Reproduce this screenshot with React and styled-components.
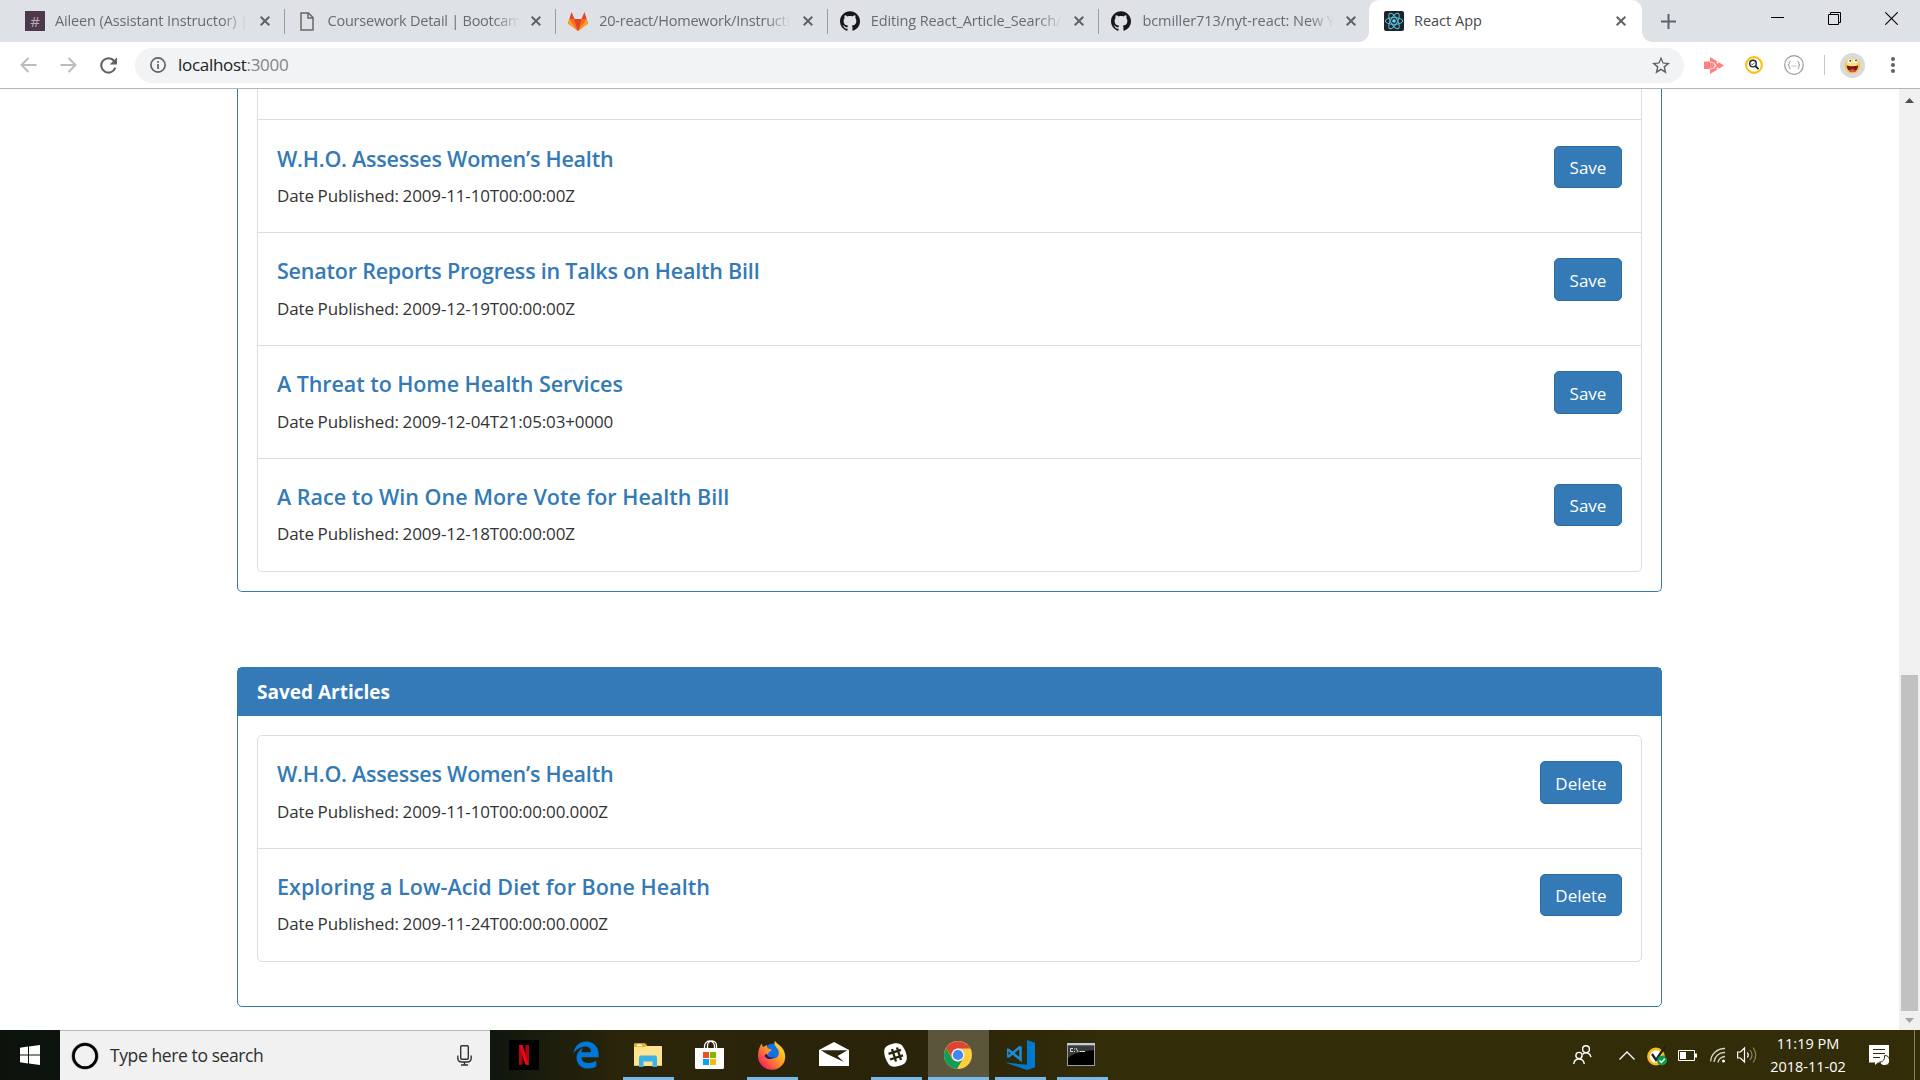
import React from 'react';
import styled, { createGlobalStyle, css } from 'styled-components';
import { SiGithub } from 'react-icons/si';
import { FaEdgeLegacy } from 'react-icons/fa6';

const GlobalStyle = createGlobalStyle`
  * { box-sizing: border-box; }
  html, body { margin: 0; padding: 0; overflow: hidden; background: #fff; }
  body { font-family: "Open Sans", "Noto Sans", sans-serif; color: #333; }
  svg { display: block; flex: none; }
`;

/* ---------- shell ---------- */
const Screen = styled.div`
  width: 1920px;
  height: 1080px;
  display: flex;
  flex-direction: column;
  overflow: hidden;
`;

/* ---------- tab strip ---------- */
const TabStrip = styled.div`
  height: 42px;
  flex: none;
  display: flex;
  align-items: stretch;
  padding-left: 13px;
  background: #dee1e6;
`;
const Tab = styled.div`
  width: 271.6px;
  display: flex;
  align-items: center;
  padding: 0 15px 0 12px;
  position: relative;
  ${(p) => p.$divided && css`
    &::after {
      content: "";
      position: absolute;
      right: 0;
      top: 9px;
      width: 1px;
      height: 25px;
      background: #9a9da1;
    }
  `}
  ${(p) => p.$active && css`
    margin-left: -2px;
    padding: 0 16px 0 15px;
    width: 273px;
    background: #fff;
    border-radius: 10px 10px 0 0;
    &::before, &::after {
      content: "";
      position: absolute;
      bottom: 0;
      width: 10px;
      height: 10px;
    }
    &::before { left: -10px; background: radial-gradient(circle at 0 0, transparent 9.5px, #fff 10px); }
    &::after { right: -10px; background: radial-gradient(circle at 100% 0, transparent 9.5px, #fff 10px); }
  `}
`;
const Favicon = styled.div`
  width: 20px;
  height: 20px;
  display: flex;
  align-items: center;
  justify-content: center;
`;
const SlackChannel = styled(Favicon)`
  background: #4d394b;
  color: #b9aab8;
  font-size: 15px;
  line-height: 20px;
`;
const TabTitle = styled.div`
  width: 194px;
  margin-left: ${(p) => p.$gap || 10}px;
  height: 20px;
  font-size: 14.5px;
  line-height: 20px;
  letter-spacing: ${(p) => p.$track || 0}px;
  white-space: nowrap;
  color: ${(p) => (p.$active ? '#45494d' : '#686c71')};
  ${(p) => !p.$active && css`mask-image: linear-gradient(90deg, #000 167px, transparent 192px);`}
`;
const TabClose = styled.div`
  margin-left: auto;
  width: 10px;
`;
const NewTab = styled.div`
  display: flex;
  align-items: center;
  padding-left: 19px;
`;
const WindowButtons = styled.div`
  margin-left: auto;
  display: flex;
  align-items: flex-start;
  padding: 12px 22px 0 0;
  gap: 44px;
`;

/* ---------- toolbar ---------- */
const Toolbar = styled.div`
  height: 47px;
  flex: none;
  display: flex;
  align-items: center;
  border-bottom: 1px solid #b4b5b7;
  padding: 0 21px 0 20px;
  background: #fff;
`;
const NavButtons = styled.div`
  display: flex;
  align-items: center;
  gap: 23px;
  width: 115px;
`;
const Omnibox = styled.div`
  width: 1549px;
  height: 35px;
  border-radius: 18px;
  background: #f1f3f4;
  display: flex;
  align-items: center;
  padding: 0 14px 0 15px;
`;
const Url = styled.div`
  margin-left: 12px;
  flex: 1;
  font-size: 17px;
  line-height: 24px;
  letter-spacing: -0.3px;
  color: #202124;
  span { color: #80868b; }
`;
const Extensions = styled.div`
  flex: 1;
  display: flex;
  align-items: center;
  margin-left: 20px;
`;
const ExtensionSlot = styled.div`
  width: ${(p) => p.$w}px;
  display: flex;
  align-items: center;
`;
const ExtensionDivider = styled.div`
  width: 1px;
  height: 20px;
  background: #c4c6c9;
  margin-right: 15px;
`;

/* ---------- page ---------- */
const Viewport = styled.div`
  height: 941px;
  flex: none;
  display: flex;
  overflow: hidden;
`;
const Page = styled.main`
  flex: 1;
  display: flex;
  flex-direction: column;
  align-items: center;
  overflow: hidden;
`;
const Panel = styled.section`
  width: 1425px;
  flex: none;
  border: 1px solid #337ab7;
  border-radius: 5px;
  ${(p) => p.$continued && css`border-top: 0; border-radius: 0 0 5px 5px; margin-bottom: 75px;`}
`;
const PanelHeading = styled.h3`
  margin: 0;
  height: 48px;
  padding: 1px 0 0 19px;
  background: #337ab7;
  color: #fff;
  font-size: 19px;
  font-weight: 700;
  line-height: 47px;
`;
const PanelBody = styled.div`
  padding: ${(p) => p.$padding};
`;
const ArticleList = styled.ul`
  margin: 0;
  padding: 0;
  list-style: none;
  border: 1px solid #ddd;
  border-radius: 5px;
  ${(p) => p.$continued && css`border-top: 0; border-radius: 0 0 5px 5px; padding-top: 30px;`}
`;
const ArticleRow = styled.li`
  height: 113px;
  display: flex;
  justify-content: space-between;
  align-items: flex-start;
  padding: ${(p) => (p.$low ? 26 : 25)}px 19px 0 19px;
  border-top: 1px solid #ddd;
  ${ArticleList} > &:first-child {
    ${(p) => p.$flush && css`border-top: 0; height: 112px;`}
  }
`;
const ArticleTitle = styled.h4`
  margin: 0 0 ${(p) => (p.$tight ? 12 : 13)}px;
  font-size: 21.5px;
  font-weight: 600;
  line-height: 26px;
  letter-spacing: ${(p) => p.$track}px;
  color: #337ab7;
  white-space: nowrap;
`;
const Published = styled.p`
  margin: 0;
  font-size: 17px;
  line-height: 24px;
  letter-spacing: -0.14px;
  word-spacing: -0.5px;
  color: #333;
`;
const ActionButton = styled.button`
  height: ${(p) => (p.$tight ? 42 : 43)}px;
  width: ${(p) => p.$w}px;
  padding: 2px 0 0;
  border: 1px solid #2e6da4;
  border-radius: 5px;
  background: #337ab7;
  color: #fff;
  font: 400 17px/24px "Open Sans", "Noto Sans", sans-serif;
`;

/* ---------- scrollbar ---------- */
const ScrollTrack = styled.div`
  width: 21px;
  background: #f0f0f0;
  display: flex;
  flex-direction: column;
  align-items: center;
  padding: 9px 0 7px;
`;
const ScrollThumb = styled.div`
  width: 17px;
  height: 336px;
  background: #c1c1c1;
  margin: auto 0 7px;
`;

/* ---------- taskbar ---------- */
const Taskbar = styled.footer`
  height: 50px;
  flex: none;
  display: flex;
  background: linear-gradient(90deg, #0c130d 0, #0f160e 490px, #2b250a 620px, #29230a 900px, #332c08 1100px, #332c08 100%);
`;
const StartButton = styled.div`
  width: 60px;
  display: flex;
  align-items: center;
  justify-content: center;
`;
const SearchBox = styled.div`
  width: 430px;
  display: flex;
  align-items: center;
  border-top: 1px solid #b9b9b9;
  background: #f1f1f1;
  padding: 0 18px 0 11px;
`;
const SearchText = styled.div`
  flex: 1;
  margin: 0 0 1px 11px;
  font-size: 17.5px;
  line-height: 24px;
  letter-spacing: -0.4px;
  color: #2f2f2f;
`;
const Apps = styled.div`
  display: flex;
  padding-left: 3px;
`;
const AppSlot = styled.div`
  width: 62px;
  display: flex;
  align-items: center;
  justify-content: center;
  padding: ${(p) => p.$padding || 0};
  background: ${(p) => (p.$focused ? '#5b553b' : 'transparent')};
  box-shadow: ${(p) => (p.$focused ? 'inset 0 -3px #76b9ed' : 'none')};
  ${(p) => p.$focused && css`width: 61px; margin-left: 1px; padding-right: 1px;`}
  ${(p) => p.$running && css`
    background: linear-gradient(#76b9ed, #76b9ed) 50% 100% / 51px 3px no-repeat;
  `}
`;
const Tray = styled.div`
  flex: 1;
  display: flex;
  align-items: center;
  justify-content: flex-end;
`;
const TrayItem = styled.div`
  width: ${(p) => p.$w}px;
  flex: none;
`;
const Clock = styled.div`
  width: 86px;
  margin-right: 18px;
  text-align: center;
  color: #fff;
  font-size: 14.5px;
  line-height: 23px;
`;
const NoticeItem = styled.div`
  width: 45px;
`;
const ShowDesktop = styled.div`
  width: 6px;
  align-self: stretch;
  border-left: 1px solid #84804f;
`;

/* ---------- icons ---------- */
const Cross = () => (
  <svg width="10" height="10" viewBox="0 0 10 10"><path d="M.7.7l8.6 8.6M9.3.7L.7 9.3" stroke="#5f6368" strokeWidth="2" /></svg>
);
const PageIcon = () => (
  <svg width="14" height="19" viewBox="0 0 14 19">
    <path d="M1 1h7.500l4.500 4.500V18H1zM8 1v5h5" fill="none" stroke="#6b6863" strokeWidth="1.500" />
  </svg>
);
const Gitlab = () => (
  <svg width="20" height="19" viewBox="0 0 20 19">
    <path d="M10 19L0 11.500 3.500 0 6.500 7h7L16.500 0 20 11.500z" fill="#e24329" />
    <path d="M10 19L6.300 7H1.400zM10 19l3.700-12h4.900z" fill="#fc6d26" />
    <path d="M6.300 7h7.400L10 19z" fill="#e24329" />
    <path d="M1.400 7L0 11.500 10 19zM18.600 7L20 11.500 10 19z" fill="#fca326" />
  </svg>
);
const ReactIcon = () => (
  <svg width="20" height="20" viewBox="0 0 20 20">
    <rect width="20" height="20" rx="2" fill="#20232a" />
    <g fill="none" stroke="#57c1dc" strokeWidth="1">
      <ellipse cx="10" cy="10" rx="8.700" ry="3.400" />
      <ellipse cx="10" cy="10" rx="8.700" ry="3.400" transform="rotate(60 10 10)" />
      <ellipse cx="10" cy="10" rx="8.700" ry="3.400" transform="rotate(120 10 10)" />
    </g>
    <circle cx="10" cy="10" r="1.800" fill="#61dafb" />
  </svg>
);
const Plus = () => (
  <svg width="15" height="15" viewBox="0 0 15 15"><path d="M7.500 0v15M0 7.500h15" stroke="#5f6368" strokeWidth="2" /></svg>
);
const Minimize = () => (
  <svg width="13" height="13" viewBox="0 0 13 13"><path d="M0 5.500h13" stroke="#000" /></svg>
);
const Restore = () => (
  <svg width="13" height="13" viewBox="0 0 13 13"><path d="M.5 2.500h10v10H.5zM2.500 2.500v-2h10v10h-2" fill="none" stroke="#000" /></svg>
);
const CloseWindow = () => (
  <svg width="13" height="13" viewBox="0 0 13 13"><path d="M.3.3l12.400 12.400M12.700.3L.3 12.700" stroke="#000" strokeWidth="1.100" /></svg>
);
const Arrow = ({ flip }) => (
  <svg width="17" height="16" viewBox="0 0 17 16">
    <path transform={flip ? 'matrix(-1 0 0 1 17 0)' : undefined} d="M16.500 8H1.500M8.500 1L1.500 8l7 7" fill="none" stroke="#babcbe" strokeWidth="2" />
  </svg>
);
const Reload = () => (
  <svg width="17" height="17" viewBox="0 0 17 17">
    <path d="M14.200 4A7.200 7.200 0 1 0 15.300 10.700" fill="none" stroke="#5f6368" strokeWidth="2.100" />
    <path d="M17 .2V7.500H9.700z" fill="#5f6368" />
  </svg>
);
const Info = () => (
  <svg width="16" height="16" viewBox="0 0 16 16">
    <circle cx="8" cy="8" r="7.100" fill="none" stroke="#5f6368" strokeWidth="1.700" />
    <path d="M8 7v5M8 4v1.800" stroke="#5f6368" strokeWidth="1.700" />
  </svg>
);
const Star = () => (
  <svg width="18" height="18" viewBox="0 0 24 24">
    <path fill="#5f6368" d="M24 9.240l-8.630-.74L12 .5 8.630 8.510 0 9.240l6.550 5.680L4.580 23.500 12 18.900l7.420 4.600-1.960-8.580L24 9.240zM12 16.500l-4.510 2.800 1.200-5.260-3.970-3.460 5.240-.45L12 5.100l2.050 5.040 5.240.45-3.970 3.460 1.200 5.260L12 16.500z" />
  </svg>
);
const PinkArrow = () => (
  <svg width="20" height="17" viewBox="0 0 20 17">
    <path d="M0 4.500h6v7.500H0z" fill="#ff8080" />
    <path d="M6 0L20 8.500 6 17v-4.500l4-1 2.500-3-2.500-3-4-1z" fill="#ff8080" />
    <path d="M6 5.500h3l2 3-2 3H6z" fill="#ff8a8a" />
    <circle cx="13.500" cy="5.500" r="1" fill="#fff" />
    <circle cx="13.500" cy="11.500" r="1" fill="#fff" />
  </svg>
);
const Magnifier = () => (
  <svg width="18" height="18" viewBox="0 0 18 18">
    <circle cx="9" cy="9" r="7.900" fill="#fff" stroke="#fdc010" strokeWidth="2.100" />
    <circle cx="8" cy="7.600" r="3.300" fill="none" stroke="#222" strokeWidth="1.400" />
    <path d="M10.500 10.200l3 3" stroke="#222" strokeWidth="1.900" />
    <path d="M6.300 8l1.300.6 2-2" fill="none" stroke="#222" strokeWidth=".8" />
  </svg>
);
const Braces = () => (
  <svg width="20" height="20" viewBox="0 0 20 20">
    <circle cx="10" cy="10" r="9.300" fill="none" stroke="#9b9b9b" strokeWidth="1.200" />
    <path d="M6.500 6.500c-1.500 0-1.300.7-1.300 1.800s-.2 1.700-1.200 1.700c1 0 1.200.6 1.200 1.700s-.2 1.800 1.300 1.800M13.500 6.500c1.500 0 1.300.7 1.300 1.800s.2 1.700 1.200 1.700c-1 0-1.200.6-1.200 1.700s.2 1.800-1.300 1.800" fill="none" stroke="#8f8f8f" />
    <path d="M7.500 11h1M9.500 11h1M11.500 11h1" stroke="#8f8f8f" />
  </svg>
);
const Avatar = () => (
  <svg width="25" height="25" viewBox="0 0 25 25">
    <circle cx="12.500" cy="12.500" r="12.500" fill="#dadada" />
    <circle cx="12.500" cy="12.800" r="7.800" fill="#f4c64f" />
    <ellipse cx="12.500" cy="9.500" rx="6" ry="4.300" fill="#fbe08a" />
    <circle cx="9.700" cy="8.500" r="2" fill="#fff" /><circle cx="15.300" cy="8" r="2" fill="#fff" />
    <circle cx="10.200" cy="7.800" r=".9" fill="#333" /><circle cx="16" cy="7.300" r=".9" fill="#333" />
    <path d="M6.800 12.600c3 1 8 1 11.300 0-.1 4-2.500 6.700-5.600 6.700s-5.600-2.800-5.700-6.700z" fill="#7c1717" />
    <path d="M9 17.500c1.500-1.700 5-1.700 6.800 0-2 2-5 2-6.800 0z" fill="#e0524a" />
  </svg>
);
const Dots = () => (
  <svg width="4" height="18" viewBox="0 0 4 18" fill="#5f6368"><circle cx="2" cy="3" r="2" /><circle cx="2" cy="9" r="2" /><circle cx="2" cy="15" r="2" /></svg>
);
const ScrollArrow = ({ down }) => (
  <svg width="9" height="5" viewBox="0 0 9 5"><path d={down ? 'M0 0h9L4.500 5z' : 'M0 5h9L4.500 0z'} fill={down ? '#a3a3a3' : '#505050'} /></svg>
);
const WindowsLogo = () => (
  <svg width="20" height="20" viewBox="0 0 20 20" fill="#fff">
    <path d="M0 2.700L8 1.600v7.900H0zM9 1.500L20 0v9.500H9zM0 10.500h8v7.900L0 17.300zM9 10.500h11V20L9 18.500z" />
  </svg>
);
const Cortana = () => (
  <svg width="28" height="28" viewBox="0 0 28 28">
    <circle cx="14" cy="14" r="12.300" fill="none" stroke="#8a8a8a" strokeWidth="2.500" />
    <circle cx="14" cy="14" r="11.600" fill="none" stroke="#000" strokeWidth="2.700" />
  </svg>
);
const Mic = () => (
  <svg width="15" height="21" viewBox="0 0 15 21" fill="none" stroke="#333" strokeWidth="1.400">
    <rect x="3.700" y=".8" width="7.600" height="13.400" rx="1" />
    <path d="M.8 10.500v2.500c0 2.500 1.500 4 4 4h5.400c2.500 0 4-1.500 4-4v-2.500M7.500 17v3M4 20h7" />
  </svg>
);
const Netflix = () => (
  <svg width="30" height="30" viewBox="0 0 30 30">
    <rect width="30" height="30" />
    <path d="M10 5h3.500v19.600l-3.500.4zM16.500 5H20v20l-3.500-.4z" fill="#b1060f" />
    <path d="M10 5h3.500L20 25l-3.800-.4z" fill="#e50914" />
  </svg>
);
const Explorer = () => (
  <svg width="28" height="24" viewBox="0 0 28 24">
    <path d="M0 1.500Q0 .5 1 .5h10l2 2.500h14q1 0 1 1V23H0z" fill="#ffe593" />
    <path d="M0 1.500Q0 .5 1 .5h10l2 1.500-2 2H0z" fill="#e9ae2c" />
    <path d="M3 1.500h5v1.700H3z" fill="#fff" />
    <path d="M5 24V14.500q0-2 2-2h14q2 0 2 2V24h-4.500v-5.500h-9V24z" fill="#3bb1e6" />
    <path d="M0 22h5v1H0zM23 22h5v1h-5z" fill="#edbd4b" />
  </svg>
);
const Store = () => (
  <svg width="29" height="29" viewBox="0 0 29 29">
    <path d="M9.500 8V6.500a5 5.500 0 0 1 10 0V8M12.500 8V5.500a4.500 4.500 0 0 1 9 0V8" fill="none" stroke="#fff" strokeWidth="1.300" />
    <path d="M0 8h29v19.500q0 1.500-1.500 1.500h-26Q0 29 0 27.500z" fill="#fff" />
    <path d="M8 12h6v6H8z" fill="#f25022" /><path d="M15 12h6v6h-6z" fill="#7fba00" />
    <path d="M8 19h6v6H8z" fill="#00a4ef" /><path d="M15 19h6v6h-6z" fill="#ffb900" />
  </svg>
);
const Firefox = () => (
  <svg width="28" height="29" viewBox="0 0 28 29">
    <defs>
      <linearGradient id="ffx" x1="1" y1="0" x2="0" y2="1">
        <stop offset="0" stopColor="#fff44f" /><stop offset=".35" stopColor="#ffb21c" /><stop offset=".6" stopColor="#ff7139" /><stop offset=".85" stopColor="#f0295a" /><stop offset="1" stopColor="#b5179e" />
      </linearGradient>
    </defs>
    <circle cx="15" cy="12" r="9.500" fill="#1170e4" />
    <path d="M17 0c2 3 7 5 9 10 4 9-2 18.700-12 18.700C6 28.700 0 22.500 0 15 0 9 2 5 3.500 2.500L5 6l4-2c-.5 2 .5 4 3 4 2 0 2 1 0 2.500-2 1-2.500 3-1 5 2.500 3 7.500 2.500 9-.5 2-4 0-7-2-9-1.500-2-2-4-1-6z" fill="url(#ffx)" />
    <path d="M9 13c1 3 4 4 7 3-2 3-7 2.500-9 0-1-1.500 0-3 2-3z" fill="#20206f" />
  </svg>
);
const Mail = () => (
  <svg width="30" height="24" viewBox="0 0 30 24">
    <path d="M0 8L15 0l15 8v16H0z" fill="#fff" />
    <path d="M2 8.300h26.500L18.500 14l6.500 6-17-8z" fill="#2a250b" />
  </svg>
);
const Slack = () => (
  <svg width="23" height="24" viewBox="0 0 23 24">
    <path d="M5 2C11-.5 16-.5 18.500 3 22 8 23.500 13 22.500 17c-1 3.500-3.500 5-8 6-4.500 1.200-8 .8-10-2C1 16 0 11 .2 7.500.5 5 2 3.300 5 2z" fill="#fff" />
    <path d="M8 6l4 12.500M13 4.500l4 12.500M4.500 10.800l12.500-4M6 16.500l13-4.200" stroke="#2a250b" strokeWidth="2.300" />
  </svg>
);
const Chrome = () => (
  <svg width="28" height="28" viewBox="0 0 28 28">
    <circle cx="14" cy="14" r="14" fill="#ffcd40" />
    <path d="M1.900 7A14 14 0 0 1 26.100 7.500H14a6.500 6.500 0 0 0-6 9z" fill="#db4437" />
    <path d="M1.900 7A14 14 0 0 0 13 28l6-10.500a6.500 6.500 0 0 1-10.900 0z" fill="#0f9d58" />
    <circle cx="14" cy="14" r="6.400" fill="#f1f1f1" />
    <circle cx="14" cy="14" r="5.100" fill="#4285f4" />
  </svg>
);
const VsCode = () => (
  <svg width="30" height="30" viewBox="0 0 30 30">
    <path d="M22 0l8 2.700v24.500L22 30 0 22.500l22 2.300z" fill="#007acc" />
    <path d="M15.500 6.500v13L3 9.500M15.500 6.500L3 17" fill="none" stroke="#1f8ad2" strokeWidth="2.600" />
    <path d="M2.700 8.500v9" stroke="#1f8ad2" strokeWidth="1.600" />
  </svg>
);
const Terminal = () => (
  <svg width="28" height="23" viewBox="0 0 28 23">
    <rect x=".5" y=".5" width="27" height="22" fill="#000" stroke="#9a9ea3" />
    <rect width="28" height="2.500" fill="#c6ccd3" />
    <path d="M1 3h26v4C17 8 6 10 1 15z" fill="#3a3a3a" />
    <path d="M6 5.500H3.500v3H6M7.500 5.500v1M7.500 8v1M9 5l2 4M12.500 8.500H18" fill="none" stroke="#ddd" />
  </svg>
);
const People = () => (
  <svg width="19" height="20" viewBox="0 0 19 20" fill="none" stroke="#fff" strokeWidth="1.400">
    <circle cx="13" cy="4.200" r="3.400" /><path d="M9.700 9.200c3-3 7.500-1.200 8.300 3" />
    <circle cx="6" cy="10.500" r="3.100" /><path d="M.8 19c.5-6.500 9.500-7 10.500 0" />
  </svg>
);
const Chevron = () => (
  <svg width="16" height="9" viewBox="0 0 16 9"><path d="M.5 8.500L8 1l7.500 7.500" fill="none" stroke="#fff" strokeWidth="1.300" /></svg>
);
const Norton = () => (
  <svg width="20" height="21" viewBox="0 0 20 21">
    <circle cx="9" cy="11.500" r="7.600" fill="#fff" stroke="#fdbb12" strokeWidth="2.600" />
    <path d="M5 9l4 6 9.500-14" fill="none" stroke="#222" strokeWidth="2.300" />
    <circle cx="15" cy="15.500" r="5" fill="#109848" />
    <path d="M12.500 15.500l2 2 3.300-3.700" fill="none" stroke="#fff" strokeWidth="1.500" />
  </svg>
);
const Battery = () => (
  <svg width="19" height="11" viewBox="0 0 19 11"><path d="M.5.5h16v10H.5z" fill="none" stroke="#fff" /><path d="M2 2h6v7H2zM17 3.500h2v4h-2z" fill="#fff" /></svg>
);
const Wifi = () => (
  <svg width="16" height="16" viewBox="0 0 16 16" fill="none" stroke="#d8d6c8" strokeWidth="1.300">
    <path d="M.6 14.500A14 14 0 0 1 15 1.500M4 15A10.500 10.500 0 0 1 15 5.500M8 15.500A7 7 0 0 1 15 9.500" />
    <circle cx="13.500" cy="14" r="1.500" fill="#fff" stroke="none" />
  </svg>
);
const Volume = () => (
  <svg width="20" height="18" viewBox="0 0 20 18" fill="none" stroke="#fff" strokeWidth="1.200">
    <path d="M.6 6H3.500L7.500 2v14l-4-4H.6z" />
    <path d="M10.300 6.500q2 2.500 0 5" /><path d="M13 4q4 5 0 10M16.200 1.500q5 7.500 0 15" stroke="#8b875f" />
  </svg>
);
const Notice = () => (
  <svg width="20" height="20" viewBox="0 0 20 20">
    <path d="M0 0h20v17.500H9L6 20v-2.500H0z" fill="#fff" />
    <path d="M4 4.500h12M4 8.500h12M4 12.500h7" stroke="#332c08" strokeWidth="1.200" />
    <path d="M15.500 10.500a5 5 0 1 1-4.700 6.300c2.500.7 5.300-2 4.700-6.300z" fill="#fff" stroke="#332c08" />
  </svg>
);

/* ---------- data ---------- */
const tabs = [
  { title: 'Aileen (Assistant Instructor) |', icon: 'slack', track: -0.13, gap: 10 },
  { title: 'Coursework Detail | Bootcam', icon: 'page', track: -0.24, gap: 11 },
  { title: '20-react/Homework/Instructi', icon: 'gitlab', track: -0.2, gap: 11 },
  { title: 'Editing React_Article_Search/', icon: 'github', track: -0.12, gap: 11 },
  { title: 'bcmiller713/nyt-react: New Y', icon: 'github', track: -0.07, gap: 11 },
];
const results = [
  { title: 'W.H.O. Assesses Women’s Health', date: '2009-11-10T00:00:00Z', track: -0.22, low: true, tight: true },
  { title: 'Senator Reports Progress in Talks on Health Bill', date: '2009-12-19T00:00:00Z', track: -0.21 },
  { title: 'A Threat to Home Health Services', date: '2009-12-04T21:05:03+0000', track: -0.07 },
  { title: 'A Race to Win One More Vote for Health Bill', date: '2009-12-18T00:00:00Z', track: 0.01, tight: true },
];
const saved = [
  { title: 'W.H.O. Assesses Women’s Health', date: '2009-11-10T00:00:00.000Z', track: -0.22 },
  { title: 'Exploring a Low-Acid Diet for Bone Health', date: '2009-11-24T00:00:00.000Z', track: 0.02, tight: true },
];
const apps = [
  { id: 'netflix', icon: <Netflix /> },
  { id: 'edge', icon: <FaEdgeLegacy size={28} color="#0078d7" /> },
  { id: 'explorer', icon: <Explorer />, running: true },
  { id: 'store', icon: <Store />, padding: '0 1px 1px 0' },
  { id: 'firefox', icon: <Firefox />, running: true },
  { id: 'mail', icon: <Mail />, padding: '0 0 2px' },
  { id: 'slack', icon: <Slack />, running: true, padding: '0 1px 0 0' },
  { id: 'chrome', icon: <Chrome />, focused: true },
  { id: 'vscode', icon: <VsCode />, running: true },
  { id: 'terminal', icon: <Terminal />, running: true, padding: '0 2px 2px 0' },
];

const TabIcon = ({ kind }) => {
  if (kind === 'slack') return <SlackChannel>#</SlackChannel>;
  return (
    <Favicon>
      {kind === 'page' && <PageIcon />}
      {kind === 'gitlab' && <Gitlab />}
      {kind === 'github' && <SiGithub size={20} color="#191717" />}
      {kind === 'react' && <ReactIcon />}
    </Favicon>
  );
};

const Article = ({ item, action, width, flush }) => (
  <ArticleRow $flush={flush} $low={item.low}>
    <div>
      <ArticleTitle $track={item.track} $tight={item.tight}>{item.title}</ArticleTitle>
      <Published>Date Published: {item.date}</Published>
    </div>
    <ActionButton $w={width} $tight={item.tight}>{action}</ActionButton>
  </ArticleRow>
);

export default function App() {
  return (
    <Screen>
      <GlobalStyle />
      <TabStrip>
        {tabs.map((t, i) => (
          <Tab key={t.title} $divided={i < 4}>
            <TabIcon kind={t.icon} />
            <TabTitle $track={t.track} $gap={t.gap}>{t.title}</TabTitle>
            <TabClose><Cross /></TabClose>
          </Tab>
        ))}
        <Tab $active>
          <TabIcon kind="react" />
          <TabTitle $active>React App</TabTitle>
          <TabClose><Cross /></TabClose>
        </Tab>
        <NewTab><Plus /></NewTab>
        <WindowButtons>
          <Minimize />
          <Restore />
          <CloseWindow />
        </WindowButtons>
      </TabStrip>

      <Toolbar>
        <NavButtons>
          <Arrow />
          <Arrow flip />
          <Reload />
        </NavButtons>
        <Omnibox>
          <Info />
          <Url>localhost<span>:3000</span></Url>
          <Star />
        </Omnibox>
        <Extensions>
          <ExtensionSlot $w={41}><PinkArrow /></ExtensionSlot>
          <ExtensionSlot $w={39}><Magnifier /></ExtensionSlot>
          <ExtensionSlot $w={40}><Braces /></ExtensionSlot>
          <ExtensionDivider />
          <ExtensionSlot $w={51}><Avatar /></ExtensionSlot>
          <Dots />
        </Extensions>
      </Toolbar>

      <Viewport>
        <Page>
          <Panel $continued>
            <PanelBody $padding="0 19px 19px">
              <ArticleList $continued>
                {results.map((r) => (
                  <Article key={r.title} item={r} action="Save" width={68} />
                ))}
              </ArticleList>
            </PanelBody>
          </Panel>
          <Panel>
            <PanelHeading>Saved Articles</PanelHeading>
            <PanelBody $padding="19px 19px 44px">
              <ArticleList>
                {saved.map((s) => (
                  <Article key={s.title} item={s} action="Delete" width={82} flush />
                ))}
              </ArticleList>
            </PanelBody>
          </Panel>
        </Page>
        <ScrollTrack>
          <ScrollArrow />
          <ScrollThumb />
          <ScrollArrow down />
        </ScrollTrack>
      </Viewport>

      <Taskbar>
        <StartButton><WindowsLogo /></StartButton>
        <SearchBox>
          <Cortana />
          <SearchText>Type here to search</SearchText>
          <Mic />
        </SearchBox>
        <Apps>
          {apps.map((a) => (
            <AppSlot key={a.id} $running={a.running} $focused={a.focused} $padding={a.padding}>{a.icon}</AppSlot>
          ))}
        </Apps>
        <Tray>
          <TrayItem $w={46}><People /></TrayItem>
          <TrayItem $w={28}><Chevron /></TrayItem>
          <TrayItem $w={31}><Norton /></TrayItem>
          <TrayItem $w={32}><Battery /></TrayItem>
          <TrayItem $w={27}><Wifi /></TrayItem>
          <TrayItem $w={28}><Volume /></TrayItem>
          <Clock>
            <div>11:19 PM</div>
            <div>2018-11-02</div>
          </Clock>
          <NoticeItem><Notice /></NoticeItem>
          <ShowDesktop />
        </Tray>
      </Taskbar>
    </Screen>
  );
}
